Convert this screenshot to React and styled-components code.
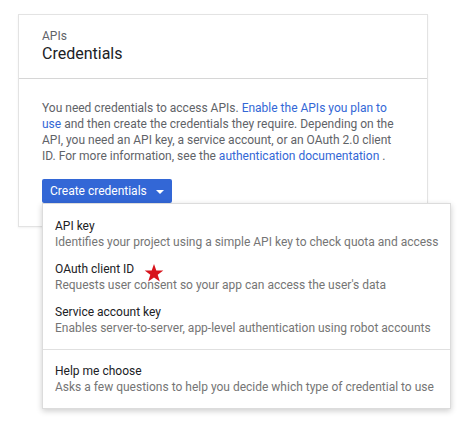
import styled, { createGlobalStyle } from "styled-components";

const GlobalStyle = createGlobalStyle`
  body {
    margin: 0;
    background: #fff;
    font-family: Roboto, "Liberation Sans", Arial, sans-serif;
  }
`;

const Page = styled.div`
  box-sizing: border-box;
  min-height: 430px;
  padding: 14px 0 0 18px;
`;

const Card = styled.section`
  width: 410px;
  box-sizing: border-box;
  border: 1px solid #e3e3e3;
  box-shadow: 0 1px 2px rgba(0, 0, 0, 0.06);
  background: #fff;
`;

const Header = styled.header`
  padding: 13px 23px 14px;
  border-bottom: 1px solid #d6d6d6;
`;

const Eyebrow = styled.div`
  font-size: 12px;
  line-height: 16px;
  color: #5f6368;
`;

const Title = styled.h1`
  margin: 0;
  font-size: 16px;
  line-height: 20px;
  font-weight: 400;
  color: #202124;
`;

const Body = styled.div`
  padding: 21px 24px 23px 23px;
`;

const Text = styled.p`
  margin: 0 0 15px;
  font-size: 12px;
  line-height: 16px;
  color: #5f6368;
`;

const Link = styled.a`
  color: #3367d6;
  text-decoration: none;
`;

const ButtonWrap = styled.div`
  position: relative;
  display: inline-block;
  vertical-align: top;
`;

const Button = styled.button`
  display: flex;
  align-items: center;
  gap: 9px;
  height: 24px;
  padding: 0 8px;
  border: none;
  border-radius: 2px;
  background: #3367d6;
  color: #fff;
  font-family: inherit;
  font-size: 12px;
  white-space: nowrap;
  cursor: pointer;
`;

const Caret = styled.span`
  width: 0;
  height: 0;
  border-left: 4px solid transparent;
  border-right: 4px solid transparent;
  border-top: 4px solid #fff;
  margin-top: 1px;
`;

const Menu = styled.div`
  position: absolute;
  top: 100%;
  left: 0;
  z-index: 10;
  width: 409px;
  box-sizing: border-box;
  background: #fff;
  border: 1px solid #dcdcdc;
  box-shadow: 0 2px 6px rgba(0, 0, 0, 0.2);
`;

const Section = styled.div`
  padding: ${(p) => p.$pad};
  & + & {
    border-top: 1px solid #e0e0e0;
  }
`;

const Item = styled.div`
  position: relative;
  padding: 6px 12px 5px 12px;
  cursor: pointer;
`;

const ItemTitle = styled.div`
  font-size: 12px;
  line-height: 16px;
  color: #202124;
`;

const ItemDesc = styled.div`
  font-size: 12px;
  line-height: 16px;
  color: #757575;
  white-space: nowrap;
`;

const Star = styled.svg`
  position: absolute;
  left: 101px;
  top: 8px;
  width: 20px;
  height: 20px;
`;

const items = [
  {
    title: "API key",
    desc: "Identifies your project using a simple API key to check quota and access",
  },
  {
    title: "OAuth client ID",
    desc: "Requests user consent so your app can access the user's data",
    star: true,
  },
  {
    title: "Service account key",
    desc: "Enables server-to-server, app-level authentication using robot accounts",
  },
];

export default function App() {
  return (
    <>
      <GlobalStyle />
      <Page>
        <Card>
          <Header>
            <Eyebrow>APIs</Eyebrow>
            <Title>Credentials</Title>
          </Header>
          <Body>
            <Text>
              You need credentials to access APIs.{" "}
              <Link href="#">Enable the APIs you plan to use</Link> and then
              create the credentials they require. Depending on the API, you
              need an API key, a service account, or an OAuth 2.0 client ID.
              For more information, see the{" "}
              <Link href="#">authentication documentation</Link> .
            </Text>
            <ButtonWrap>
              <Button type="button">
                Create credentials
                <Caret />
              </Button>
              <Menu>
                <Section $pad="8px 0 8px">
                  {items.map((it) => (
                    <Item key={it.title}>
                      <ItemTitle>{it.title}</ItemTitle>
                      <ItemDesc>{it.desc}</ItemDesc>
                      {it.star && (
                        <Star viewBox="0 0 20 20">
                          <polygon
                            points="10,1 12.3,7.6 19.3,7.6 13.7,11.8 15.8,18.6 10,14.5 4.2,18.6 6.3,11.8 0.7,7.6 7.7,7.6"
                            fill="#d7141c"
                          />
                        </Star>
                      )}
                    </Item>
                  ))}
                </Section>
                <Section $pad="7px 0 8px">
                  <Item>
                    <ItemTitle>Help me choose</ItemTitle>
                    <ItemDesc>
                      Asks a few questions to help you decide which type of
                      credential to use
                    </ItemDesc>
                  </Item>
                </Section>
              </Menu>
            </ButtonWrap>
          </Body>
        </Card>
      </Page>
    </>
  );
}
